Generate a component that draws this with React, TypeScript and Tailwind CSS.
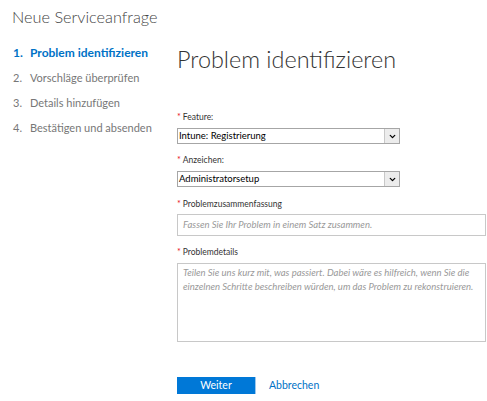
import { ChevronDown } from 'lucide-react';

const steps = [
  { n: '1.', label: 'Problem identifizieren', active: true },
  { n: '2.', label: 'Vorschläge überprüfen' },
  { n: '3.', label: 'Details hinzufügen' },
  { n: '4.', label: 'Bestätigen und absenden' },
];

function Label({ children }: { children: React.ReactNode }) {
  return (
    <div className="flex items-start text-[8.5px] leading-[12px] text-[#333]">
      <span className="text-[#e81123] text-[9px] mr-[2px]">*</span>
      {children}
    </div>
  );
}

function Select({ value }: { value: string }) {
  return (
    <div className="mt-[5px] flex w-[223px] h-[16px] border border-[#a6a6a6] bg-white">
      <div className="flex-1 pl-[1px] text-[9.5px] leading-[14px] text-black">{value}</div>
      <div className="w-[15px] border-l border-[#c8c8c8] bg-[#ececec] flex items-center justify-center">
        <ChevronDown className="w-[9px] h-[9px] text-black" strokeWidth={3.5} />
      </div>
    </div>
  );
}

export default function App() {
  return (
    <div className="w-[487px] h-[401px] bg-white font-['Lato',sans-serif] overflow-hidden">
      <div className="flex">
        {/* Sidebar */}
        <aside className="w-[177px] pl-3 pt-[6px] shrink-0">
          <h1 className="text-[16.3px] leading-[22px] font-light text-[#444]">Neue Serviceanfrage</h1>
          <ol className="mt-[16px] flex flex-col gap-[8px]">
            {steps.map((s) => (
              <li
                key={s.n}
                className={`flex leading-[17px] ${
                  s.active ? 'text-[12px] text-[#0072c6] font-bold' : 'text-[11px] text-[#777]'
                }`}
              >
                <span className="w-[18px] pl-[1px]">{s.n}</span>
                <span>{s.label}</span>
              </li>
            ))}
          </ol>
        </aside>

        {/* Form */}
        <main className="flex-1 pt-[43px] pr-[1px]">
          <h2 className="text-[23.4px] leading-[32px] font-light text-[#333]">Problem identifizieren</h2>

          <div className="mt-[36px]">
            <Label>Feature:</Label>
            <Select value="Intune: Registrierung" />
          </div>

          <div className="mt-[10px]">
            <Label>Anzeichen:</Label>
            <Select value="Administratorsetup" />
          </div>

          <div className="mt-[11px]">
            <Label>Problemzusammenfassung</Label>
            <div className="mt-[4px] h-[22px] border border-[#c8c8c8] px-[5px] text-[9.5px] leading-[20px] italic text-[#999]">
              Fassen Sie Ihr Problem in einem Satz zusammen.
            </div>
          </div>

          <div className="mt-[10px]">
            <Label>Problemdetails</Label>
            <div className="mt-[5px] h-[79px] border border-[#c8c8c8] px-[5px] pt-[2px] text-[9.5px] leading-[14px] italic text-[#999]">
              Teilen Sie uns kurz mit, was passiert. Dabei wäre es hilfreich, wenn Sie die einzelnen Schritte
              beschreiben würden, um das Problem zu rekonstruieren.
            </div>
          </div>

          <div className="mt-[35px] flex items-center">
            <button className="w-[79px] h-[17px] bg-[#0078d7] text-white text-[10.5px] leading-[17px] border-r border-[#9cc8ee]">
              Weiter
            </button>
            <button className="ml-[13px] text-[#0072c6] text-[10.5px] leading-[17px]">Abbrechen</button>
          </div>
        </main>
      </div>
    </div>
  );
}
